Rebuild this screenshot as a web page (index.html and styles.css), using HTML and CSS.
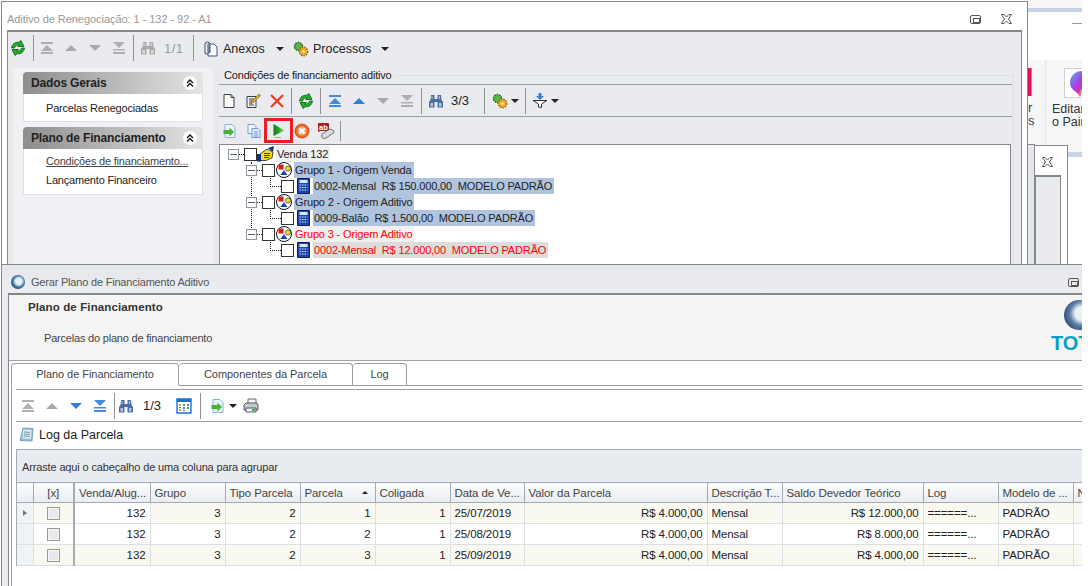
FILE: index.html
```html
<!DOCTYPE html>
<html lang="pt-BR">
  <head>
    <meta charset="UTF-8" />
    <title>Aditivo de Renegociação</title>
    <link rel="stylesheet" href="styles.css">
  </head>
  <body>
    <svg class="defs" width="0" height="0">
      <defs>
        <linearGradient id="playfill" x1="0" y1="0" x2="1" y2="0">
          <stop offset="0" stop-color="#177a1c" />
          <stop offset=".45" stop-color="#2f9a2c" />
          <stop offset="1" stop-color="#a6d98a" />
        </linearGradient>
      </defs>
      <symbol id="winx" viewBox="0 0 11 10">
        <path fill="none" stroke="#555" d="M.5.500h2.500l2.500 2.500L8 .500h2.500L7.500 5l3 4.500H8L5.500 7 3 9.500H.5l3-4.500z"/>
      </symbol>
      <symbol id="refresh" viewBox="0 0 16 16">
        <path fill="#22b02a" stroke="#0a5c10" stroke-width=".8" d="M1.500 8C2 4 5 1.800 9 2.200L11 .500l3 6H7.500l2-1.700C7 4.500 5 5.800 4.500 8z"/>
        <path fill="#22b02a" stroke="#0a5c10" stroke-width=".8" transform="rotate(180 8 8)" d="M1.500 8C2 4 5 1.800 9 2.200L11 .500l3 6H7.500l2-1.700C7 4.500 5 5.800 4.500 8z"/>
      </symbol>
      <symbol id="first" viewBox="0 0 16 16"><path fill="currentColor" d="M2 2h12v2H2zM8 5l6 6H2zM2 12h12v2H2z" opacity=".9"/></symbol>
      <symbol id="prev" viewBox="0 0 16 16"><path fill="currentColor" d="M8 5l6 6H2z"/></symbol>
      <symbol id="next" viewBox="0 0 16 16"><path fill="currentColor" d="M2 5h12l-6 6z"/></symbol>
      <symbol id="last" viewBox="0 0 16 16"><path fill="currentColor" d="M2 2h12L8 8zM2 9h12v1.500H2zM2 12h12v2H2z" opacity=".9"/></symbol>
      <symbol id="binoc" viewBox="0 0 16 16">
        <path fill="currentColor" d="M3 2h3.500v4h3V2H13l.5 5 1.500 2v5.500H9.500V9h-3v5.500H1V9l1.500-2z"/>
        <path fill="#fff" opacity=".6" d="M3.500 3h1v3h-1zM11 3h1v3h-1zM2.500 10h2.500v3.500H2.500zM11 10h2.500v3.500H11z"/>
      </symbol>
      <symbol id="clip" viewBox="0 0 16 16">
        <path fill="#fff" stroke="#46507a" d="M6 3h6l3 3v9H6z"/>
        <path fill="none" stroke="#5d6a8f" stroke-width="1.200" d="M8 12V3.500a2.500 2.500 0 0 0-5 0V11a2 2 0 0 0 4 0V4.500"/>
      </symbol>
      <symbol id="gears" viewBox="0 0 16 16">
        <circle cx="5.500" cy="5.500" r="4" fill="#5cb548" stroke="#1f6b1a" stroke-width="1.500" stroke-dasharray="1.500 1"/>
        <circle cx="10.500" cy="10.500" r="4.200" fill="#eeb02a" stroke="#a8650e" stroke-width="1.500" stroke-dasharray="1.500 1"/>
        <circle cx="10.500" cy="10.500" r="1.200" fill="#fff3c0"/>
      </symbol>
      <symbol id="doc" viewBox="0 0 16 16"><path fill="#fdfdf6" stroke="#39414f" d="M3 1.500h7l3 3v10H3z"/><path fill="none" stroke="#39414f" d="M10 1.500v3h3"/></symbol>
      <symbol id="edit" viewBox="0 0 16 16">
        <path fill="#f7f5e8" stroke="#39414f" d="M2 3.500h9v11H2z"/>
        <path stroke="#39414f" d="M4 6h5M4 8h4M4 10h3M4 12h5"/>
        <path fill="#e8a93a" stroke="#7d5a1a" stroke-width=".7" d="M14 1l1.500 1.500-7 7-2.500 1 1-2.500z"/>
      </symbol>
      <symbol id="del" viewBox="0 0 16 16"><path stroke="#ee3a26" stroke-width="2.200" fill="none" d="M2 2l12 12M14 2L2 14"/></symbol>
      <symbol id="docin" viewBox="0 0 16 16">
        <path fill="#eef4fb" stroke="#8db0d8" d="M3 1.500h7l3 3v10H3z"/>
        <path fill="#45b52e" d="M1.500 7h6V4.500L12 9l-4.500 4.500V11h-6z"/>
      </symbol>
      <symbol id="copy" viewBox="0 0 16 16">
        <path fill="#f3f7fd" stroke="#6f9bd8" d="M2 1.500h6l2 2v7H2z"/>
        <path fill="#dfeafb" stroke="#6f9bd8" d="M6 5.500h6l2 2v7H6z"/>
        <path stroke="#6f9bd8" d="M8 9h4M8 11h4M8 13h4"/>
      </symbol>
      <symbol id="play" viewBox="0 0 16 16">
        <path fill="url(#playfill)" d="M2.500 1l11 6.500-11 5.500z"/>
        <path stroke="#a5aaa5" d="M3 14.500h7"/>
      </symbol>
      <symbol id="stop" viewBox="0 0 16 16">
        <circle cx="8" cy="8" r="7" fill="#ec6a26" stroke="#c8501a"/>
        <circle cx="8" cy="8" r="4.500" fill="#f6a979"/>
        <path stroke="#fff" stroke-width="2.200" d="M5.500 5.500l5 5M10.500 5.500l-5 5"/>
      </symbol>
      <symbol id="filter" viewBox="0 0 16 16">
        <path fill="#fff" stroke="#333" d="M1 7.500h14L9.500 11v3.500l-3-.5v-3z"/>
        <path fill="#3b7fd4" d="M6.500 0h3v3H12L8 7 4 3h2.500z"/>
      </symbol>
      <symbol id="hand" viewBox="0 0 18 16">
        <path fill="#0c2f8c" d="M11 2l6-2-1 6z"/>
        <path fill="#f5d63a" stroke="#222" stroke-width=".8" d="M3 8l7-5 6 3-1 6-6 2.500H3z"/>
        <path stroke="#222" stroke-width=".8" d="M7 7.500h6M7 9.500h6M7 11.500h5"/>
        <path fill="#0c2f8c" d="M0 8h4v7.500H0z"/>
      </symbol>
      <symbol id="group" viewBox="0 0 18 16">
        <circle cx="9" cy="8" r="7.500" fill="#fff" stroke="#111"/>
        <path fill="#e01818" d="M3.500 2.500h5v5h-5z"/>
        <circle cx="13" cy="6.500" r="2.500" fill="#f2d52e" stroke="#222" stroke-width=".6"/>
        <path fill="#1e3fc0" d="M9 8l3.500 5h-7z"/>
      </symbol>
      <symbol id="calc" viewBox="0 0 13 16">
        <path fill="#1d47a8" stroke="#0c1f5c" d="M.5.500h12v15H.5z"/>
        <path fill="#d8e4f8" d="M2.500 2h8v3h-8z"/>
        <path fill="none" stroke="#d8e4f8" stroke-dasharray="1.500 1" d="M2.500 7h8M2.500 9.500h8M2.500 12h8"/>
      </symbol>
      <symbol id="cols" viewBox="0 0 16 16">
        <path fill="#fff" stroke="#1f6fd0" stroke-width="1.400" d="M1 1h14v14H1z"/>
        <path fill="#1f6fd0" d="M1 1h14v3H1z"/>
        <path fill="#e5a13a" d="M3 6h2v2H3zM3 11h2v2H3z"/>
        <path fill="#4aa84a" d="M7 6h2v2H7zM11 9h2v2h-2z"/>
        <path fill="#5b7fd0" d="M11 6h2v2h-2zM7 9h2v2H7zM3 9h2v1H3zM7 12h2v1H7z"/>
      </symbol>
      <symbol id="print" viewBox="0 0 16 16">
        <path fill="#fff" stroke="#667" d="M5 1h8v5H5z"/>
        <path fill="#c4cad2" stroke="#556" d="M1 7l2-2h11l1 2v5H1z"/>
        <path fill="#f4f4f4" stroke="#556" d="M3 10h10v4H3z"/>
        <path fill="#38b048" d="M9 11h3v2H9z"/>
      </symbol>
      <symbol id="note" viewBox="0 0 16 16">
        <path fill="#8fc0de" stroke="#5e8ba8" stroke-width=".7" d="M4 1l10 .5L13 14l-12-.5z"/>
        <path fill="#dce8ef" d="M4 2.500l8.500.5L12 12l-8.500-.5z"/>
        <path stroke="#7a9cb3" d="M5 5l6 .5M5 7l6 .5M4.500 9l6 .5"/>
      </symbol>
      <symbol id="chevrons" viewBox="0 0 8 8">
        <path fill="none" stroke="#111" stroke-width="1.300" d="M1 4l3-3 3 3M1 7.500l3-3 3 3"/>
      </symbol>
    </svg>

    <div class="screen">
      <!-- programa ao fundo -->
      <div class="ribbon-app">
        <div class="strip"></div>
        <div class="band"></div>
        <div class="blank"><span class="dash"></span></div>
        <div class="ribbon">
          <div class="ribbon-cut">
            <span class="pink"></span>
            <span class="cut-r">r</span>
            <span class="cut-s">s</span>
          </div>
          <div class="ribbon-paint">
            <div class="tile">
              <svg width="20" height="28" viewBox="0 0 20 28">
                <defs>
                  <linearGradient id="drop" x1="0" y1="0" x2="1" y2="1">
                    <stop offset="0" stop-color="#3fb8f0" />
                    <stop offset=".45" stop-color="#b23be0" />
                    <stop offset="1" stop-color="#f03a6a" />
                  </linearGradient>
                </defs>
                <path fill="url(#drop)" d="M0 13C0 5 6 1 12 1s8 3 8 3v15c-3 0-6 0-8 2l-2 6c-2-6-10-6-10-14z" />
                <path fill="#f5a623" d="M9 27c0-4 1-7 3-8l2 1c-2 1-4 3-5 7z" />
              </svg>
            </div>
            <div class="paint-label">Editar<br />o Paint 3D</div>
          </div>
        </div>
        <div class="band band-low"></div>
      </div>

      <div class="back-win back-win-a"></div>
      <div class="back-win back-win-b">
        <div class="back-title"><svg width="11" height="10"><use href="#winx" /></svg></div>
        <div class="back-body"></div>
      </div>

      <!-- janela do aditivo -->
      <div class="window window-top">
        <div class="win-title">
          <span class="title-text muted">Aditivo de Renegociação: 1 - 132 - 92 - A1</span>
          <span class="win-controls">
            <span class="win-max"></span>
            <svg width="11" height="10"><use href="#winx" /></svg>
          </span>
        </div>
        <div class="win-body">
          <div class="toolbar toolbar-main">
            <span class="btn btn-first"><svg width="16" height="16"><use href="#refresh" /></svg></span>
            <span class="sep sep-first"></span>
            <span class="btn off"><svg width="16" height="16"><use href="#first" /></svg></span>
            <span class="btn off"><svg width="16" height="16"><use href="#prev" /></svg></span>
            <span class="btn off"><svg width="16" height="16"><use href="#next" /></svg></span>
            <span class="btn off"><svg width="16" height="16"><use href="#last" /></svg></span>
            <span class="sep"></span>
            <span class="btn off"><svg width="16" height="16"><use href="#binoc" /></svg></span>
            <span class="count muted count-main">1/1</span>
            <span class="sep"></span>
            <span class="menu menu-clip"><svg width="16" height="16"><use href="#clip" /></svg>Anexos<i class="caret"></i></span>
            <span class="menu menu-gears"><svg width="16" height="16"><use href="#gears" /></svg>Processos<i class="caret"></i></span>
          </div>

          <div class="columns">
            <aside class="sidebar">
              <section class="side-group">
                <h3 class="side-head">Dados Gerais<span class="collapse"><svg width="8" height="8"><use href="#chevrons" /></svg></span></h3>
                <div class="side-items side-items-a">
                  <a>Parcelas Renegociadas</a>
                </div>
              </section>
              <section class="side-group">
                <h3 class="side-head">Plano de Financiamento<span class="collapse"><svg width="8" height="8"><use href="#chevrons" /></svg></span></h3>
                <div class="side-items side-items-b">
                  <a class="current">Condições de financiamento...</a>
                  <a>Lançamento Financeiro</a>
                </div>
              </section>
            </aside>

            <fieldset class="conditions">
              <legend>Condições de financiamento aditivo</legend>
              <div class="toolbar toolbar-crud">
                <span class="btn"><svg width="16" height="16"><use href="#doc" /></svg></span>
                <span class="btn"><svg width="16" height="16"><use href="#edit" /></svg></span>
                <span class="btn"><svg width="16" height="16"><use href="#del" /></svg></span>
                <span class="sep"></span>
                <span class="btn"><svg width="16" height="16"><use href="#refresh" /></svg></span>
                <span class="sep"></span>
                <span class="btn blue"><svg width="16" height="16"><use href="#first" /></svg></span>
                <span class="btn blue"><svg width="16" height="16"><use href="#prev" /></svg></span>
                <span class="btn off"><svg width="16" height="16"><use href="#next" /></svg></span>
                <span class="btn off"><svg width="16" height="16"><use href="#last" /></svg></span>
                <span class="sep"></span>
                <span class="btn navy"><svg width="16" height="16"><use href="#binoc" /></svg></span>
                <span class="count count-crud">3/3</span>
                <span class="sep"></span>
                <span class="btn btn-drop"><svg width="16" height="16"><use href="#gears" /></svg><i class="caret"></i></span>
                <span class="sep"></span>
                <span class="btn btn-drop btn-filter"><svg width="16" height="16"><use href="#filter" /></svg><i class="caret"></i></span>
              </div>
              <div class="toolbar toolbar-actions">
                <span class="btn"><svg width="16" height="16"><use href="#docin" /></svg></span>
                <span class="btn"><svg width="16" height="16"><use href="#copy" /></svg></span>
                <span class="btn btn-marked"><svg width="16" height="16"><use href="#play" /></svg></span>
                <span class="btn"><svg width="16" height="16"><use href="#stop" /></svg></span>
                <span class="btn">
                  <svg width="18" height="16" viewBox="0 0 18 16">
                    <path fill="#a8232a" d="M1 0h10q1 0 1 1v6q0 1-1 1H4L1 9z" />
                    <text x="2" y="6.500" font-family="Liberation Sans" font-size="7.500" font-weight="bold" fill="#fff">ab</text>
                    <path fill="#dcdcdc" stroke="#555" stroke-width=".8" d="M13 6l3.500 1.500q1 1 0 2.500L9 15q-2 1-3.500 0T5 11z" />
                  </svg>
                </span>
                <span class="sep"></span>
              </div>

              <div class="tree">
                <span class="tree-rail"></span>
                <div class="node node-root">
                  <span class="expander"></span><span class="dots"></span><span class="check"></span>
                  <svg width="18" height="16"><use href="#hand" /></svg>
                  <span class="label label-plain">Venda 132</span>
                </div>
                <div class="node node-group">
                  <span class="expander"></span><span class="dots"></span><span class="check"></span>
                  <svg width="18" height="16"><use href="#group" /></svg>
                  <span class="label label-sel">Grupo 1 - Origem Venda</span>
                </div>
                <div class="node node-item">
                  <span class="elbow"></span><span class="check"></span>
                  <svg width="13" height="16"><use href="#calc" /></svg>
                  <span class="label label-sel">0002-Mensal&nbsp; R$ 150.000,00&nbsp; MODELO PADRÃO</span>
                </div>
                <div class="node node-group">
                  <span class="expander"></span><span class="dots"></span><span class="check"></span>
                  <svg width="18" height="16"><use href="#group" /></svg>
                  <span class="label label-sel">Grupo 2 - Origem Aditivo</span>
                </div>
                <div class="node node-item">
                  <span class="elbow"></span><span class="check"></span>
                  <svg width="13" height="16"><use href="#calc" /></svg>
                  <span class="label label-sel">0009-Balão&nbsp; R$ 1.500,00&nbsp; MODELO PADRÃO</span>
                </div>
                <div class="node node-group">
                  <span class="expander"></span><span class="dots"></span><span class="check"></span>
                  <svg width="18" height="16"><use href="#group" /></svg>
                  <span class="label label-plain label-red">Grupo 3 - Origem Aditivo</span>
                </div>
                <div class="node node-item">
                  <span class="elbow"></span><span class="check"></span>
                  <svg width="13" height="16"><use href="#calc" /></svg>
                  <span class="label label-red label-gray">0002-Mensal&nbsp; R$ 12.000,00&nbsp; MODELO PADRÃO</span>
                </div>
              </div>
            </fieldset>
          </div>
        </div>
      </div>

      <!-- janela gerar plano -->
      <div class="window window-plan">
        <div class="win-title win-title-plan">
          <span class="globe"></span>
          <span class="title-text">Gerar Plano de Financiamento Aditivo</span>
          <span class="win-controls"><span class="win-max"></span></span>
        </div>
        <div class="win-body win-body-plan">
          <header class="plan-head">
            <div>
              <h2>Plano de Financiamento</h2>
              <p>Parcelas do plano de financiamento</p>
            </div>
            <div class="totvs">
              <span class="totvs-ball"></span>
              <span class="totvs-name">TOTVS</span>
            </div>
          </header>

          <div class="tabs">
            <span class="tab tab-active tab-a">Plano de Financiamento</span>
            <span class="tab tab-b">Componentes da Parcela</span>
            <span class="tab tab-c">Log</span>
          </div>

          <div class="tab-page">
            <div class="toolbar toolbar-plan">
              <span class="btn off"><svg width="16" height="16"><use href="#first" /></svg></span>
              <span class="btn off"><svg width="16" height="16"><use href="#prev" /></svg></span>
              <span class="btn blue"><svg width="16" height="16"><use href="#next" /></svg></span>
              <span class="btn blue"><svg width="16" height="16"><use href="#last" /></svg></span>
              <span class="sep"></span>
              <span class="btn navy btn-binoc"><svg width="16" height="16"><use href="#binoc" /></svg></span>
              <span class="count count-plan">1/3</span>
              <span class="btn btn-cols"><svg width="16" height="16"><use href="#cols" /></svg></span>
              <span class="sep"></span>
              <span class="btn btn-drop btn-export"><svg width="16" height="16"><use href="#docin" /></svg><i class="caret"></i></span>
              <span class="btn btn-print"><svg width="16" height="16"><use href="#print" /></svg></span>
            </div>

            <div class="log-title"><svg width="16" height="16"><use href="#note" /></svg>Log da Parcela</div>

            <div class="grid">
              <div class="group-panel">Arraste aqui o cabeçalho de uma coluna para agrupar</div>
              <table>
                <colgroup>
                  <col class="c-ind" /><col class="c-chk" /><col class="c-76" /><col class="c-75" /><col class="c-75" />
                  <col class="c-75" /><col class="c-75" /><col class="c-74" /><col class="c-183" /><col class="c-75" />
                  <col class="c-141" /><col class="c-75" /><col class="c-75" /><col class="c-60" />
                </colgroup>
                <thead>
                  <tr>
                    <th></th><th class="th-chk">[x]</th><th>Venda/Alug...</th><th>Grupo</th><th>Tipo Parcela</th>
                    <th class="th-sort">Parcela<i class="sort"></i></th><th>Coligada</th><th>Data de Ve...</th><th>Valor da Parcela</th>
                    <th>Descrição T...</th><th>Saldo Devedor Teórico</th><th>Log</th><th>Modelo de ...</th><th>N</th>
                  </tr>
                </thead>
                <tbody>
                  <tr class="odd">
                    <td class="ind"><i class="row-mark"></i></td><td class="chk"><span class="box"></span></td>
                    <td class="num focus">132</td><td class="num">3</td><td class="num">2</td><td class="num">1</td><td class="num">1</td>
                    <td>25/07/2019</td><td class="num">R$ 4.000,00</td><td>Mensal</td><td class="num">R$ 12.000,00</td>
                    <td>======...</td><td>PADRÃO</td><td></td>
                  </tr>
                  <tr>
                    <td class="ind"></td><td class="chk"><span class="box"></span></td>
                    <td class="num">132</td><td class="num">3</td><td class="num">2</td><td class="num">2</td><td class="num">1</td>
                    <td>25/08/2019</td><td class="num">R$ 4.000,00</td><td>Mensal</td><td class="num">R$ 8.000,00</td>
                    <td>======...</td><td>PADRÃO</td><td></td>
                  </tr>
                  <tr class="odd">
                    <td class="ind"></td><td class="chk"><span class="box"></span></td>
                    <td class="num">132</td><td class="num">3</td><td class="num">2</td><td class="num">3</td><td class="num">1</td>
                    <td>25/09/2019</td><td class="num">R$ 4.000,00</td><td>Mensal</td><td class="num">R$ 4.000,00</td>
                    <td>======...</td><td>PADRÃO</td><td></td>
                  </tr>
                </tbody>
              </table>
            </div>
          </div>
        </div>
      </div>
    </div>
  </body>
</html>
```

FILE: styles.css
```css
* {
  padding: 0;
  margin: 0;
  box-sizing: border-box;
}
html,
body {
  height: 100%;
  background: #fff;
  overflow: hidden;
  font-family: "Liberation Sans", Arial, sans-serif;
  font-size: 12px;
  color: #222;
}
svg {
  display: block;
  flex: none;
}
.defs {
  position: absolute;
}
.muted {
  color: #9a9a9a;
}
/* -------------- */
.screen {
  position: relative;
  width: 1082px;
  height: 586px;
  overflow: hidden;
}

/* programa ao fundo */
.ribbon-app {
  position: absolute;
  left: 1028px;
  top: 0;
  width: 54px;
  height: 264px;
  display: flex;
  flex-direction: column;
}
.strip {
  height: 8px;
  background: #f7f7f8;
}
.band {
  height: 4px;
  background: #c9d3e5;
}
.band-low {
  height: 5px;
}
.blank {
  height: 48px;
  padding: 11px 0 0 44px;
}
.dash {
  display: block;
  height: 1px;
  background: #999;
}
.ribbon {
  height: 92px;
  background: #f5f6f7;
  display: flex;
}
.ribbon-cut {
  width: 18px;
  flex: none;
  border-right: 1px solid #e2e4e7;
  padding-top: 8px;
  font-size: 13px;
  line-height: 13px;
  color: #444;
}
.ribbon-cut span {
  display: block;
}
.pink {
  width: 4px;
  height: 28px;
  background: #e8105c;
  border-right: 1px solid #999;
  margin-bottom: 5px;
}
.ribbon-paint {
  flex: 1;
  min-width: 0;
  padding: 8px 0 0 6px;
  overflow: hidden;
  white-space: nowrap;
}
.tile {
  width: 30px;
  height: 30px;
  background: #fff;
  border: 1px solid #d0d0d0;
  padding: 1px 0 0 5px;
  margin-left: 12px;
  margin-bottom: 5px;
}
.paint-label {
  font-size: 12.5px;
  line-height: 13px;
  color: #333;
}
.back-win {
  position: absolute;
  background: #fff;
  border: 1px solid #84888d;
}
.back-win-a {
  left: 1027px;
  top: 144px;
  width: 8px;
  height: 130px;
  background: #e3e6ea;
}
.back-win-b {
  left: 1034px;
  top: 145px;
  width: 34px;
  height: 130px;
}
.back-title {
  height: 29px;
  padding: 11px 0 0 7px;
}
.back-body {
  width: 26px;
  height: 100px;
  background: #e9ebef;
  border: 1px solid #84888d;
  border-width: 2px 1px 0 1px;
}

/* janelas */
.window {
  position: absolute;
  background: #fff;
  border: 1px solid #84888d;
  display: flex;
  flex-direction: column;
}
.window-top {
  left: 1px;
  top: 1px;
  width: 1027px;
  height: 270px;
}
.window-plan {
  left: 1px;
  top: 264px;
  width: 1090px;
  height: 330px;
  background: #e9ebef;
}
.win-title {
  height: 28px;
  flex: none;
  display: flex;
  align-items: center;
  padding: 6px 0 0 5px;
}
.title-text {
  font-size: 11px;
  letter-spacing: -.05px;
}
.win-controls {
  margin-left: auto;
  display: flex;
  align-items: center;
  gap: 20px;
  padding-right: 15px;
}
.win-max {
  width: 11px;
  height: 9px;
  border: 1px solid #555;
  border-radius: 2px;
  position: relative;
}
.win-max::after {
  content: "";
  position: absolute;
  left: 2px;
  top: 2px;
  width: 5px;
  height: 3px;
  border: 1px solid #555;
}
.win-title-plan {
  padding: 6px 0 0 9px;
  background: linear-gradient(#e5e7ea, #ebedf0);
  color: #555;
  gap: 6px;
}
.win-title-plan .title-text {
  letter-spacing: -.2px;
}
.win-title-plan .win-controls {
  padding-right: 11px;
}
.globe {
  width: 14px;
  height: 14px;
  border-radius: 50%;
  background: radial-gradient(circle at 55% 45%, #e4eef5 0 30%, #3d6f9c 55%, #10233f 100%);
}
.win-body {
  flex: 1;
  margin: 0 5px 0 5px;
  background: #e9ebef;
  border: 1px solid #84888d;
  border-top-width: 2px;
  min-height: 0;
}
.win-body-plan {
  margin: 0 0 0 6px;
  background: #fff;
}

/* barras */
.toolbar {
  display: flex;
  align-items: center;
}
.toolbar-main {
  height: 32px;
  margin-bottom: 4px;
  font-size: 12.5px;
}
.btn {
  width: 24px;
  height: 20px;
  display: flex;
  align-items: center;
  justify-content: center;
  flex: none;
}
.btn-first {
  width: 20px;
}
.off {
  color: #a9a9a9;
}
.blue {
  color: #2f80dc;
}
.navy {
  color: #4a6ea6;
}
.sep {
  width: 1px;
  height: 26px;
  background: #8f9296;
  margin: 0 2px;
  flex: none;
}
.sep-first {
  margin: 0 1px 0 5px;
}
.count {
  font-size: 13px;
  flex: none;
}
.count-main {
  width: 31px;
  padding-left: 4px;
  letter-spacing: .4px;
}
.menu {
  display: flex;
  align-items: center;
  gap: 5px;
  padding-top: 1px;
  flex: none;
}
.menu-clip {
  margin-left: 6px;
  width: 91px;
}
.menu-gears {
  gap: 4px;
}
.caret {
  display: block;
  width: 0;
  height: 0;
  border: 4px solid transparent;
  border-top: 4px solid #222;
  border-bottom: 0;
  flex: none;
}
.menu .caret {
  margin-left: 6px;
}

/* colunas */
.columns {
  display: flex;
  margin-left: 5px;
}
.sidebar {
  width: 200px;
  flex: none;
  height: 240px;
  background: #eff1f4;
  padding: 4px 10px;
}
.side-group {
  margin-bottom: 5px;
}
.side-head {
  height: 22px;
  display: flex;
  align-items: center;
  justify-content: space-between;
  padding: 0 6px 0 8px;
  font-size: 12px;
  letter-spacing: -.15px;
  border-radius: 4px 4px 0 0;
  background: linear-gradient(90deg, #8e8e8e, #e4e4e4);
  color: #222;
}
.collapse {
  width: 14px;
  height: 14px;
  border-radius: 50%;
  background: #fff;
  display: flex;
  align-items: center;
  justify-content: center;
}
.side-items {
  background: #fff;
  border: 1px solid #dde0e4;
  border-top: 0;
  padding-left: 22px;
  font-size: 11px;
  letter-spacing: -.2px;
}
.side-items a {
  display: block;
}
.side-items-a {
  height: 28px;
  padding-top: 8px;
}
.side-items-b {
  height: 46px;
  padding-top: 6px;
}
.side-items-b a + a {
  margin-top: 7px;
}
.current {
  text-decoration: underline;
  color: #444;
}

/* financiamento */
.conditions {
  width: 797px;
  margin-left: 4px;
  height: 240px;
  border: 1px solid #dde0e4;
  padding: 0 1px;
  min-width: 0;
}
.conditions legend {
  margin-left: 2px;
  padding: 0 3px;
  line-height: 14px;
  font-size: 11px;
  letter-spacing: -.18px;
}
.toolbar-crud {
  margin-top: 2px;
  height: 33px;
  border-top: 1px solid #9a9da1;
  border-bottom: 1px solid #9a9da1;
  font-size: 13px;
}
.toolbar-crud .btn:first-child {
  margin-left: -2px;
}
.count-crud {
  width: 34px;
  padding-left: 3px;
}
.btn-drop {
  width: 36px;
  gap: 3px;
}
.btn-filter {
  margin-left: 1px;
  width: 32px;
}
.toolbar-actions {
  height: 27px;
}
.toolbar-actions .btn:first-child {
  margin-left: -1px;
}
.toolbar-actions .sep {
  height: 20px;
}
.btn-marked {
  height: 25px;
  width: 29px;
  border: 3px solid #ed1c24;
  margin: 0 -3px 0 -2px;
}

/* arvore */
.tree {
  position: relative;
  width: 792px;
  height: 130px;
  background: #fff;
  border: 1px solid #84888d;
  padding-top: 1px;
  font-size: 11px;
  letter-spacing: -.15px;
}
.tree-rail {
  position: absolute;
  left: 31px;
  top: 17px;
  height: 72px;
  border-left: 1px dotted #111;
}
.node {
  height: 16px;
  display: flex;
  align-items: center;
}
.node-root {
  padding-left: 8px;
}
.node-group {
  padding-left: 26px;
}
.node-item {
  padding-left: 50px;
}
.expander {
  width: 11px;
  height: 11px;
  border: 1px solid #8f949c;
  background: linear-gradient(#5d6470, #5d6470) center / 7px 1px no-repeat #fff;
  flex: none;
  position: relative;
  z-index: 1;
}
.dots {
  width: 5px;
  border-top: 1px dotted #111;
  flex: none;
}
.elbow {
  width: 11px;
  height: 9px;
  border-left: 1px dotted #111;
  border-bottom: 1px dotted #111;
  margin-top: -8px;
  flex: none;
}
.check {
  width: 13px;
  height: 13px;
  border: 1px solid #333;
  background: #fff;
  flex: none;
}
.node-item svg {
  margin-left: 3px;
}
.label {
  height: 16px;
  line-height: 16px;
  padding: 0 2px 0 1px;
  margin-left: 1px;
  white-space: nowrap;
}
.node-item .label {
  margin-left: 3px;
}
.label-plain {
  background: #f0f0f0;
}
.label-sel {
  background: #b0c4de;
}
.label-red {
  color: #ff0000;
}
.label-gray {
  background: #dcdcdc;
}

/* plano */
.plan-head {
  height: 66px;
  background: #f4f4f4;
  border-bottom: 1px solid #a3a3a3;
  padding: 5px 0 0 19px;
  display: flex;
  justify-content: space-between;
  overflow: hidden;
}
.plan-head h2 {
  font-size: 11.5px;
  letter-spacing: .12px;
  line-height: 14px;
  color: #333;
}
.plan-head p {
  margin: 17px 0 0 16px;
  font-size: 11px;
  letter-spacing: -.2px;
  line-height: 14px;
  color: #444;
}
.totvs {
  width: 80px;
  padding-left: 42px;
  flex: none;
}
.totvs-ball {
  display: block;
  width: 30px;
  height: 30px;
  margin-left: 13px;
  border-radius: 50%;
  background: radial-gradient(circle at 60% 45%, #e8f0f6 0 28%, #5d7fa6 50%, #141c50 100%);
}
.totvs-name {
  display: block;
  margin-top: 2px;
  font-size: 20px;
  line-height: 22px;
  font-weight: bold;
  color: #0a9fc4;
}
.tabs {
  margin-top: 2px;
  padding-left: 2px;
  display: flex;
  height: 23px;
  position: relative;
  z-index: 1;
}
.tab {
  height: 23px;
  border: 1px solid #9a9da1;
  border-left: 0;
  border-radius: 4px 4px 0 0;
  text-align: center;
  line-height: 21px;
  font-size: 11px;
  letter-spacing: -.05px;
  color: #444;
  flex: none;
}
.tab-a {
  width: 168px;
  border-left: 1px solid #9a9da1;
}
.tab-active {
  border-bottom-color: #fff;
}
.tab-b {
  width: 174px;
}
.tab-c {
  width: 54px;
}
.tab-page {
  margin: -1px 0 0 2px;
  border-top: 1px solid #9a9da1;
  border-left: 1px solid #9a9da1;
  padding: 3px 0 0 4px;
  height: 220px;
}
.toolbar-plan {
  height: 33px;
  border-top: 1px solid #9a9da1;
  border-bottom: 1px solid #9a9da1;
  font-size: 13px;
}
.btn-binoc {
  margin-left: -3px;
}
.count-plan {
  width: 32px;
  padding-left: 5px;
}
.btn-cols {
  width: 28px;
}
.btn-export {
  width: 36px;
  margin-left: 2px;
}
.btn-print {
  width: 20px;
}
.log-title {
  height: 27px;
  display: flex;
  align-items: center;
  gap: 4px;
  padding: 0 0 2px 3px;
  font-size: 12.5px;
  color: #222;
}
.grid {
  border-top: 1px solid #a3a9b5;
  border-left: 1px solid #a3a9b5;
  overflow: hidden;
}
.group-panel {
  height: 32px;
  background: #e8ebf0;
  padding-top: 11px;
  padding-left: 5px;
  font-size: 11px;
  letter-spacing: -.14px;
  line-height: 13px;
  color: #333;
}
table {
  table-layout: fixed;
  width: 1116px;
  border-collapse: collapse;
  font-size: 11.5px;
  letter-spacing: -.1px;
}
.c-ind { width: 16px; }
.c-chk { width: 41px; }
.c-60 { width: 60px; }
.c-74 { width: 74px; }
.c-75 { width: 75px; }
.c-76 { width: 76px; }
.c-141 { width: 141px; }
.c-183 { width: 183px; }
th {
  height: 20px;
  font-weight: normal;
  text-align: left;
  padding: 0 4px;
  background: linear-gradient(#fbfcfd, #e9ecf1);
  border: 1px solid #a3a9b5;
  border-left: 0;
  color: #444;
  white-space: nowrap;
  overflow: hidden;
}
.th-chk {
  text-align: center;
  border-right-width: 2px;
}
.th-sort {
  position: relative;
}
.sort {
  position: absolute;
  right: 7px;
  top: 8px;
  border: 3px solid transparent;
  border-bottom: 3px solid #222;
  border-top: 0;
}
td {
  height: 21px;
  padding: 0 4px;
  border-right: 1px solid #dcdfe4;
  border-bottom: 1px solid #dcdfe4;
  white-space: nowrap;
  overflow: hidden;
  color: #222;
}
.odd td {
  background: #f9f9f2;
}
.num {
  text-align: right;
}
.odd .focus {
  background: #fff;
}
.odd .ind,
.ind {
  background: #f0f2f5;
  padding: 0 0 0 6px;
}
.row-mark {
  display: block;
  border: 3.5px solid transparent;
  border-left: 4px solid #777;
  border-right: 0;
  width: 4px;
}
.chk {
  border-right: 2px solid #a3a9b5;
  padding: 0;
}
.box {
  display: block;
  width: 13px;
  height: 13px;
  margin: 0 auto;
  background: #e9e9e9;
  border: 1px solid #9a9a9a;
  box-shadow: inset 0 0 0 1px #f6f6f6;
}
```
